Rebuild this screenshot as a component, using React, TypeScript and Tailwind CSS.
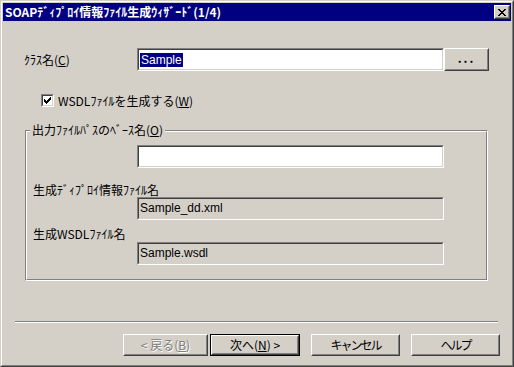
import React from "react";

const F = "font-['Noto_Sans_CJK_JP',sans-serif] text-[12px] leading-[14px] text-black";

function Sunken({ w, h, bg, children }: { w: string; h: string; bg: string; children?: React.ReactNode }) {
  return (
    <div className={`${w} ${h} border border-t-[#808080] border-l-[#808080] border-r-white border-b-white`}>
      <div className={`w-full h-full border border-t-[#404040] border-l-[#404040] border-r-[#d4d0c8] border-b-[#d4d0c8] ${bg} flex items-center pl-px overflow-hidden`}>
        {children}
      </div>
    </div>
  );
}

function Raised({ className, children }: { className?: string; children?: React.ReactNode }) {
  return (
    <div className={`border border-t-white border-l-white border-r-[#404040] border-b-[#404040] bg-[#d4d0c8] ${className ?? ""}`}>
      <div className="w-full h-full border border-t-[#d4d0c8] border-l-[#d4d0c8] border-r-[#808080] border-b-[#808080] flex items-center justify-center">
        {children}
      </div>
    </div>
  );
}

export default function App() {
  return (
    <div className={`w-[514px] h-[367px] bg-[#d4d0c8] border border-t-[#d4d0c8] border-l-[#d4d0c8] border-r-[#404040] border-b-[#404040] ${F}`}>
      <div className="w-full h-full border border-t-white border-l-white border-r-[#808080] border-b-[#808080] p-px flex flex-col">
        {/* Title bar */}
        <div className="h-[18px] bg-[#000080] flex items-center justify-between pl-[2px] pr-[1px]">
          <span className="text-white font-bold text-[12px] leading-[14px]">SOAPﾃﾞｨﾌﾟﾛｲ情報ﾌｧｲﾙ生成ｳｨｻﾞｰﾄﾞ(1/4)</span>
          <Raised className="w-[16px] h-[14px]">
            <svg width="8" height="7" viewBox="0 0 8 7" shapeRendering="crispEdges">
              <path d="M0 0h2v1h-2zM6 0h2v1h-2zM1 1h2v1h-2zM5 1h2v1h-2zM2 2h4v1h-4zM3 3h2v1h-2zM2 4h4v1h-4zM1 5h2v1h-2zM5 5h2v1h-2zM0 6h2v1h-2zM6 6h2v1h-2z" fill="#000" />
            </svg>
          </Raised>
        </div>

        {/* Content */}
        <div className="flex-1 flex flex-col">
          {/* Class name row */}
          <div className="mt-[27px] flex items-center pl-[21px]">
            <div className="w-[113px]">
              ｸﾗｽ名(<span className="underline">C</span>)
            </div>
            <Sunken w="w-[307px]" h="h-[23px]" bg="bg-white">
              <span className="bg-[#000080] text-white px-px font-['Liberation_Sans',sans-serif] text-[12px] leading-[14px]">Sample</span>
            </Sunken>
            <Raised className="w-[45px] h-[23px]">
              <span className="font-bold tracking-[2px] leading-[10px] -mt-[4px]">...</span>
            </Raised>
          </div>

          {/* Checkbox row */}
          <div className="mt-[23px] pl-[38px] flex items-center h-[13px]">
            <div className="w-[13px] h-[13px] border border-t-[#808080] border-l-[#808080] border-r-white border-b-white">
              <div className="w-full h-full border border-t-[#404040] border-l-[#404040] border-r-[#d4d0c8] border-b-[#d4d0c8] bg-white flex items-center justify-center">
                <svg width="7" height="7" viewBox="0 0 7 7" shapeRendering="crispEdges">
                  <path d="M6 0h1v3h-1zM5 1h1v3h-1zM4 2h1v3h-1zM3 3h1v3h-1zM2 4h1v3h-1zM1 3h1v3h-1zM0 2h1v3h-1z" fill="#000" />
                </svg>
              </div>
            </div>
            <span className="ml-[4px]">
              WSDLﾌｧｲﾙを生成する(<span className="underline">W</span>)
            </span>
          </div>

          {/* Group box */}
          <div className="mt-[23px] ml-[22px] w-[463px] h-[151px] relative border border-t-[#808080] border-l-[#808080] border-r-white border-b-white">
            <div className="w-full h-full border border-t-white border-l-white border-r-[#808080] border-b-[#808080] flex flex-col">
              <div className="mt-[13px] ml-[110px]">
                <Sunken w="w-[307px]" h="h-[23px]" bg="bg-white" />
              </div>
              <div className="mt-[15px] ml-[6px]">生成ﾃﾞｨﾌﾟﾛｲ情報ﾌｧｲﾙ名</div>
              <div className="mt-0 ml-[110px]">
                <Sunken w="w-[307px]" h="h-[23px]" bg="bg-[#d4d0c8]">
                  <span className="font-['Liberation_Sans',sans-serif] text-[12px] leading-[14px] -mt-[2px]">Sample_dd.xml</span>
                </Sunken>
              </div>
              <div className="mt-[7px] ml-[6px]">生成WSDLﾌｧｲﾙ名</div>
              <div className="mt-[1px] ml-[110px]">
                <Sunken w="w-[307px]" h="h-[23px]" bg="bg-[#d4d0c8]">
                  <span className="font-['Liberation_Sans',sans-serif] text-[12px] leading-[14px] -mt-[2px]">Sample.wsdl</span>
                </Sunken>
              </div>
            </div>
            <div className="absolute -top-[8px] left-[4px] bg-[#d4d0c8] px-[2px]">
              出力ﾌｧｲﾙﾊﾟｽのﾍﾞｰｽ名(<span className="underline">O</span>)
            </div>
          </div>

          {/* Separator */}
          <div className="mt-[40px] ml-[12px] w-[483px] h-[2px] border-t border-t-[#808080] border-b border-b-white" />

          {/* Buttons */}
          <div className="mt-[11px] ml-[120px] flex items-center">
            <Raised className="w-[85px] h-[22px]">
              <span className="text-[#808080] [text-shadow:1px_1px_0_#fff]">
                &lt;&nbsp;戻る(<span className="underline">B</span>)
              </span>
            </Raised>
            <div className="ml-[2px] w-[90px] h-[22px] border border-black">
              <Raised className="w-full h-full">
                <span>
                  次へ(<span className="underline">N</span>)&nbsp;&gt;
                </span>
              </Raised>
            </div>
            <Raised className="ml-[11px] w-[89px] h-[22px]">
              <span className="tracking-[-2px]">キャンセル</span>
            </Raised>
            <Raised className="ml-[11px] w-[89px] h-[22px]">
              <span className="tracking-[-2px]">ヘルプ</span>
            </Raised>
          </div>
        </div>
      </div>
    </div>
  );
}
